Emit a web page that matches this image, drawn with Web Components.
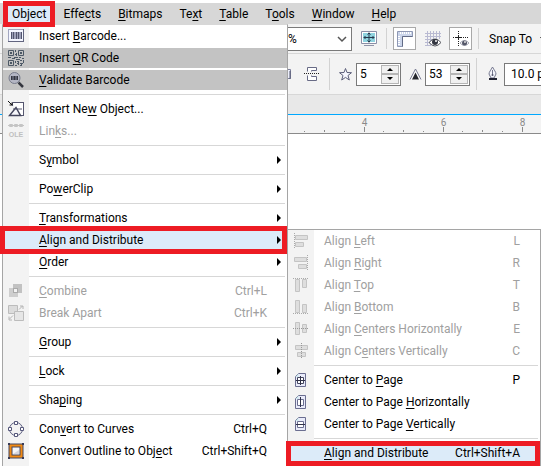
<!DOCTYPE html>
<html lang="en">
<head>
<meta charset="utf-8">
<title>Object menu</title>
<style>
html, body { margin: 0; height: 100%; }
body { overflow: hidden; font: 12px/16px Roboto, "Open Sans", sans-serif; color: #000; background: #fff; }
</style>
</head>
<body>
<app-window></app-window>

<script>
const ICONS = {
  barcode: `<rect x=".5" y="1.5" width="15" height="12" fill="#f4f6ff" stroke="#a3a7c0"/><path d="M0 13.5h16M15.5 1v13" stroke="#62657f"/><path d="M3 4h11v7H3z" fill="#9da0b8"/><path d="M3.5 4v7M5.5 4v7M8.5 4v7M10.5 4v7M13.5 4v7" stroke="#51546d"/>`,
  qr: `<g fill="none" stroke="#4d5966"><path d="M.5.5h5v5h-5zM10.5.5h5v5h-5zM.5 10.5h5v5h-5z"/><path d="M2 3h2M12 3h2M2 13h2" stroke-width="2"/><path d="M7.5 0v2M8.5 3v3M7 4.5h1M0 7.5h3M4 8.5h3M6 7.5h4M11 7.5h2M14 8.5h2M8 9.5h4M7.5 11v2M9 11.5h2M12 10.5h2M15.5 10v3M10.5 12v3M12 13.5h3M7 15.5h2M13.5 14v2M9 13.5h1M12 15.5h1"/></g>`,
  validate: `<path d="M10.5 10.5l4.500 4.500" stroke="#34363f" stroke-width="2.500"/><circle cx="6.500" cy="6" r="5.500" fill="#b4b6c4" stroke="#777b8b"/><path d="M3 4h7v4H3z" fill="#5d6070"/><path d="M3.500 4v4M6.500 4v4M9.500 4v4" stroke="#34363f"/>`,
  insert: `<path d="M4.500 1.500h11v13h-5" fill="#fff" stroke="#55566f"/><path d="M4.500 5V1.500M15.500 1v14" stroke="#55566f"/><path d="M1.500 14.500h11L8 6.500z" fill="#f6f6fa" stroke="#44455c" stroke-width="1.500"/><path d="M5 8h9" stroke="#55566f"/><path d="M0 0l4 4M4 1.500V4H1.500" fill="none" stroke="#111"/>`,
  links: `<g stroke="#c4c4c4" fill="none"><path d="M0 2.500h16"/><path d="M1.500 1.500h3v2h-3zM6.500 1.500h3v2h-3zM11.500 1.500h3v2h-3z"/></g><text x="8" y="14" text-anchor="middle" font-family="Liberation Sans" font-size="7" font-weight="700" fill="#bfbfbf">OLE</text>`,
  combine: `<path d="M5 1h9v9H5z" fill="#c2c2c2"/><path d="M1 5h9v9H1z" fill="#cecece"/><path d="M5 5h5v5H5z" fill="#aaa"/><path d="M6 6h3v3H6z" fill="#f3f3f3"/>`,
  breakapart: `<path d="M.5.5h9v8h-9z" fill="#dcdcdc" stroke="#bcbcbc"/><path d="M6.500 6.500h9v9h-9z" fill="#e6e6e6" stroke="#bcbcbc"/><path d="M11 4.500l3.500-3.500M12 1h3v3M5 10.500L1.500 14M1 11.500V15h3" fill="none" stroke="#b4b4b4"/>`,
  curves: `<circle cx="8" cy="8" r="6.500" fill="none" stroke="#55577a"/><g fill="#fff" stroke="#55577a"><path d="M6.500.5h3v3h-3zM6.500 12.500h3v3h-3zM.5 6.500h3v3h-3zM12.500 6.500h3v3h-3z"/></g>`,
  outline: `<path d="M2.500 2.500h11v11h-11z" fill="#f6f6f8" stroke="#44465f" stroke-width="4"/><path d="M2.500 2.500h11v11h-11z" fill="none" stroke="#f28a12" stroke-width="2"/><path d="M5 11h6v-4z" fill="#d5d5dd"/><path d="M0 0h2v2H0zM14 0h2v2h-2zM0 14h2v2H0zM14 14h2v2h-2z" fill="#383a55"/>`,
  left: `<path d="M1.500 0v15" stroke="#aaa" stroke-dasharray="1 1"/><path d="M2.500 2.500h12v4h-12zM2.500 9.500h8v4h-8z" fill="#dedede" stroke="#c4c4c4"/>`,
  right: `<path d="M14.500 0v15" stroke="#aaa" stroke-dasharray="1 1"/><path d="M1.500 2.500h12v4h-12zM5.500 9.500h8v4h-8z" fill="#dedede" stroke="#c4c4c4"/>`,
  top: `<path d="M0 1.500h15" stroke="#aaa" stroke-dasharray="1 1"/><path d="M2.500 2.500h4v12h-4zM9.500 2.500h4v8h-4z" fill="#dedede" stroke="#c4c4c4"/>`,
  bottom: `<path d="M0 14.500h15" stroke="#aaa" stroke-dasharray="1 1"/><path d="M2.500 1.500h4v12h-4zM9.500 5.500h4v8h-4z" fill="#dedede" stroke="#c4c4c4"/>`,
  centerh: `<path d="M2.500 1.500h4v12h-4zM9.500 3.500h4v8h-4z" fill="#dedede" stroke="#c4c4c4"/><path d="M0 7.500h15" stroke="#999" stroke-dasharray="1 1"/>`,
  centerv: `<path d="M2.500 2.500h12v4h-12zM4.500 9.500h8v4h-8z" fill="#dedede" stroke="#c4c4c4"/><path d="M8.500 0v15" stroke="#999" stroke-dasharray="1 1"/>`,
  page: `<path d="M5.500 1.500h7v13h-10V4.500z" fill="#e9ebfa" stroke="#6b6e90"/><path d="M2.500 5l3-3.500V5z" fill="#cfe9ee"/><path d="M4.500 5.500h6v6h-6z" fill="#fff" stroke="#44465f"/><path d="M7.500 4v9M3 8.500h9" stroke="#303247"/>`,
  pageh: `<path d="M5.500 1.500h7v13h-10V4.500z" fill="#e9ebfa" stroke="#6b6e90"/><path d="M2.500 5l3-3.500V5z" fill="#cfe9ee"/><path d="M4.500 5.500h6v6h-6z" fill="#fff" stroke="#6b6e90"/><path d="M7.500 3v10" stroke="#303247"/>`,
  pagev: `<path d="M5.500 1.500h7v13h-10V4.500z" fill="#e9ebfa" stroke="#6b6e90"/><path d="M2.500 5l3-3.500V5z" fill="#cfe9ee"/><path d="M4.500 5.500h6v6h-6z" fill="#fff" stroke="#6b6e90"/><path d="M3 8.500h9" stroke="#303247"/>`,
  arrow: `<path d="M6 4v8l4-4z" fill="#000"/>`,
  screen: `<path d="M.5.5h15v12H.5z" fill="#fff" stroke="#8a8ea6"/><path d="M2 2h12v9H2z" fill="#8fd3df"/><path d="M8 1.500v10M3 6.500h10M6.500 3.500L8 2l1.500 1.500M6.500 9.500L8 11l1.500-1.500M4.500 5L3 6.500 4.500 8M11.500 5L13 6.500 11.500 8" fill="none" stroke="#26384c"/><path d="M3 14.500h10" stroke="#8f93a8"/>`,
  rulers: `<path d="M.5.5h15v5h-10v10h-5z" fill="#cbd5ea" stroke="#8e98b4"/><path d="M3.500 1v2M5.500 1v2M7.500 1v2M9.500 1v2M11.500 1v2M13.500 1v2M1 5.500h2M1 7.500h2M1 9.500h2M1 11.500h2M1 13.500h2" stroke="#fff"/><path d="M5.500 15.500v-10h10" stroke="#616b86" fill="none"/>`,
  grid: `<path d="M2.500 0v15M5.500 0v15M8.500 0v15M11.500 0v8M14.500 0v8M0 2.500h16M0 5.500h16M0 8.500h9M0 11.500h6M0 14.500h6" stroke="#b9bad2"/><path d="M4 11.500q6-7 12 0q-6 7-12 0z" fill="#fff" stroke="#55575f"/><circle cx="10" cy="11" r="3" fill="#333640"/><circle cx="11" cy="10" r="1" fill="#fff"/>`,
  guides: `<path d="M5.500 0v15M0 6.500h16" stroke="#222" stroke-dasharray="1 1"/><path d="M5.500 4v5M3 6.500h5" stroke="#222"/><path d="M7 12q4.500-5 9 0q-4.500 5-9 0z" fill="#fff" stroke="#a4a6b5"/><circle cx="11.500" cy="12" r="2.500" fill="#55586a"/><circle cx="12" cy="11" r="1" fill="#ddd"/>`,
  weld: `<path d="M8.500 3.500h5v9h-5z" fill="#eceefa" stroke="#7c7f9c"/><path d="M13 5v8" stroke="#55586f"/>`,
  distribute: `<path d="M3.500 5.500v-4h9v3h-5v1M3.500 9.500v5h9v-4h-5v-1" fill="#fff" stroke="#686b86"/><path d="M0 7.500h16" stroke="#222" stroke-dasharray="1 1"/>`,
  star: `<path d="M7.500 2.500l1.500 4 4.500.2-3.500 2.800 1.300 4.500-3.800-2.600-3.800 2.600 1.300-4.500-3.500-2.800 4.500-.2z" fill="#f6f7ff" stroke="#5b5e7a"/>`,
  sharp: `<path d="M2 13.500L7.500 3 13 13.500" fill="#fff" stroke="#777a92"/><path d="M4 13.500l3.500-7 3.500 7z" fill="#26282f"/>`,
  nib: `<path d="M7.500 1C6 4 4 6 4 8l2 4h3l2-4c0-2-2-4-3.500-7z" fill="#f4f5fb" stroke="#74778e"/><path d="M7.500 4v5" stroke="#74778e"/><circle cx="7.500" cy="9" r="1" fill="#55586f"/><path d="M4 12h8v2H4z" fill="#222433"/>`,
  up: `<path d="M5 5h6L8 2z" fill="#000"/>`,
  down: `<path d="M5 2h6L8 5z" fill="#000"/>`,
  drop: `<path d="M0 6h7L3.500 10z" fill="#000"/>`,
  chevron: `<path d="M4 6l4 4 4-4" fill="none" stroke="#555" stroke-width="1.500"/>`
};

/* Shared base: renders the class's static markup into an open shadow root. */
class Part extends HTMLElement {
  constructor() {
    super();
    this.attachShadow({ mode: 'open' });
  }
  connectedCallback() { this.shadowRoot.innerHTML = this.markup(); }
}

customElements.define('ui-icon', class extends Part {
  markup() {
    return `<style>:host{display:block;flex:none;width:16px;height:16px;overflow:hidden}svg{display:block}</style>
      <svg width="16" height="16" viewBox="0 0 16 16" aria-hidden="true">${ICONS[this.getAttribute('name')]}</svg>`;
  }
});

customElements.define('menu-title', class extends Part {
  markup() {
    return `<style>
      :host{display:block;position:relative}
      button{all:unset;display:block;height:21px;line-height:22px;padding:0 9px 0 8px;white-space:nowrap}
      :host([open]) button{background:#dcebf9}
      :host([open])::after{content:"";position:absolute;inset:-2px 0 -3px -1px;border:5px solid #ed1c24;z-index:5}
      </style><button type="button"><slot></slot></button>`;
  }
});

customElements.define('menu-item', class extends Part {
  markup() {
    const icon = this.getAttribute('icon');
    const key = this.getAttribute('key');
    return `<style>
      :host{display:block;position:relative}
      button{all:unset;box-sizing:border-box;width:100%;height:22px;display:flex;align-items:center;white-space:nowrap;padding-right:20px;border:solid transparent;border-width:1px 0;background-clip:padding-box}
      .icon{width:26px;display:flex;justify-content:center;margin-right:10px;flex:none}
      .label,.key{line-height:18px}
      .key{margin-left:auto}
      .arrow{margin:0 -20px 0 auto}
      :host([disabled]) button{color:#a0a0a0}
      :host([shaded]) button{background-color:#c3c3c3}
      :host([marked]) button{background-color:#dcebf9}
      :host([marked])::after{content:"";position:absolute;inset:var(--mark-inset,-3px 0 -3px -3px);border:5px solid #ed1c24;z-index:4}
      </style>
      <button type="button" ${this.hasAttribute('disabled') ? 'disabled' : ''}>
        <span class="icon">${icon ? `<ui-icon name="${icon}"></ui-icon>` : ''}</span>
        <span class="label"><slot></slot></span>
        ${key ? `<span class="key">${key}</span>` : ''}
        ${this.hasAttribute('sub') ? '<ui-icon class="arrow" name="arrow"></ui-icon>' : ''}
      </button>`;
  }
});

customElements.define('menu-line', class extends Part {
  markup() {
    return `<style>:host{display:block;padding:3px 2px 3px 26px}
      hr{margin:0;border:0;height:1px;background:#d7d7d7}</style><hr>`;
  }
});

customElements.define('menu-panel', class extends Part {
  markup() {
    return `<style>:host{display:block;box-sizing:border-box;border:1px solid #a5a5a5;
      background:linear-gradient(90deg,#f3f3f3 26px,#fff 26px)}</style><slot></slot>`;
  }
});

customElements.define('tool-sep', class extends Part {
  markup() { return `<style>:host{display:block;align-self:stretch;flex:none;width:1px;margin:4px 6px;background:#d2d2d2}</style>`; }
});

customElements.define('tool-button', class extends Part {
  markup() {
    return `<style>:host{display:block;flex:none}
      button{all:unset;box-sizing:border-box;display:grid;place-items:center;width:23px;height:23px}
      :host([pressed]) button{background:#fff;border:1px solid #a9a9a9}</style>
      <button type="button" aria-label="${this.getAttribute('label')}"><ui-icon name="${this.getAttribute('icon')}"></ui-icon></button>`;
  }
});

customElements.define('zoom-select', class extends Part {
  markup() {
    return `<style>:host{display:flex;flex:none;align-items:center;box-sizing:border-box;height:24px;border:1px solid #7a7a7a;background:#fff}
      select{all:unset;font:inherit;flex:1}
      ui-icon{margin-right:1px}</style>
      <select aria-label="Zoom level"><option>%</option></select><ui-icon name="chevron"></ui-icon>`;
  }
});

customElements.define('number-field', class extends Part {
  markup() {
    const plain = this.hasAttribute('plain');
    return `<style>:host{display:flex;flex:none;box-sizing:border-box;width:45px;height:23px;border:1px solid #7a7a7a;background:#fff}
      :host([plain]){width:80px}
      input{all:unset;font:inherit;flex:1;min-width:0;padding-left:3px}
      :host([plain]) input{padding-left:6px}
      .spin{display:flex;flex-direction:column;margin:1px;width:18px}
      button{all:unset;flex:1;min-height:0;display:flex;justify-content:center;overflow:hidden;border:1px solid #b5b5b5;background:#f0f0f0}
      .spin ui-icon{height:7px}
      </style><input aria-label="${this.getAttribute('label')}" value="${this.getAttribute('value')}">
      ${plain ? '' : `<div class="spin"><button type="button" aria-label="Increase"><ui-icon name="up"></ui-icon></button><button type="button" aria-label="Decrease"><ui-icon name="down"></ui-icon></button></div>`}`;
  }
});

customElements.define('page-ruler', class extends Part {
  markup() {
    let marks = '';
    for (let i = 0; i < 16; i++) {
      const x = Math.floor(8 + 79 * i / 4);
      const h = i % 4 === 0 ? 5 : i % 4 === 2 ? 2 : 1;
      marks += `<path d="M${x + .5} ${17 - h}v${h}" stroke="#8a8a8a"/>`;
      if (i % 4 === 0 && i) marks += `<text x="${x + .5}" y="11" text-anchor="middle">${i / 2 + 2}</text>`;
    }
    return `<style>:host{display:block;background:#f3f3f3;border-top:1px solid #00a8ff;border-bottom:1px solid #8a8a8a}
      svg{display:block;width:100%;height:18px}text{font-size:10px;fill:#8a8a8a}</style>
      <svg aria-label="Ruler"><g transform="translate(277 0)">${marks}</g></svg>`;
  }
});

customElements.define('app-window', class extends Part {
  markup() {
    return `<style>
      :host{display:flex;flex-direction:column;position:relative;min-height:100vh;overflow:hidden}
      u{text-decoration:underline;text-underline-offset:2px;text-decoration-thickness:1px}
      nav{display:flex;margin-top:3px;padding-left:4px;background:#d7d7d7}
      .bar{display:flex;align-items:center;border-bottom:1px solid #d7d7d7;background:#f3f3f3;white-space:nowrap;overflow:hidden}
      .first{height:29px;padding-left:287px}
      .second{height:40px;padding-left:277px}
      zoom-select{width:65px;margin-right:5px}
      .first [icon=grid]{margin:0 5px}
      .snap{all:unset;flex:none;display:flex;align-items:center;gap:8px;padding-left:4px}
      .second [icon=distribute]{margin-left:7px}
      .second [icon=star]{margin:0 -1px 0 -2px}
      .second [icon=sharp]{margin:0 -2px 0 3px}
      .second [icon=nib]{margin-left:-2px}
      .gap{height:19px;background:#e8e8e8}
      .canvas{flex:1;background:#fff}
      .main{position:absolute;left:2px;top:24px;bottom:-8px;width:286px;border-top-color:#d7d7d7}
      .sub{position:absolute;left:287px;top:229px;right:0;bottom:-8px;--mark-inset:-1px 0 -2px -2px}
      </style>
      <nav>
        <menu-title open>Object</menu-title><menu-title>Effe<u>c</u>ts</menu-title><menu-title><u>B</u>itmaps</menu-title><menu-title>Te<u>x</u>t</menu-title><menu-title><u>T</u>able</menu-title><menu-title>T<u>o</u>ols</menu-title><menu-title><u>W</u>indow</menu-title><menu-title><u>H</u>elp</menu-title>
      </nav>
      <div class="bar first">
        <zoom-select></zoom-select>
        <tool-button icon="screen" label="Full-screen preview"></tool-button>
        <tool-sep></tool-sep>
        <tool-button icon="rulers" label="Show rulers" pressed></tool-button>
        <tool-button icon="grid" label="Show grid"></tool-button>
        <tool-button icon="guides" label="Show guidelines" pressed></tool-button>
        <tool-sep></tool-sep>
        <button class="snap" type="button">Snap To<ui-icon name="drop"></ui-icon></button>
      </div>
      <div class="bar second">
        <ui-icon name="weld"></ui-icon>
        <tool-button icon="distribute" label="Distribute"></tool-button>
        <tool-sep></tool-sep>
        <tool-button icon="star" label="Star points"></tool-button>
        <number-field label="Points" value="5"></number-field>
        <tool-button icon="sharp" label="Sharpness"></tool-button>
        <number-field label="Sharpness" value="53"></number-field>
        <tool-sep></tool-sep>
        <tool-button icon="nib" label="Outline width"></tool-button>
        <number-field plain label="Outline width" value="10.0 pt"></number-field>
      </div>
      <div class="gap"></div>
      <page-ruler></page-ruler>
      <div class="canvas"></div>

      <menu-panel class="main">
        <menu-item icon="barcode">Insert <u>B</u>arcode...</menu-item>
        <menu-item icon="qr" shaded>Insert <u>Q</u>R Code</menu-item>
        <menu-item icon="validate" shaded><u>V</u>alidate Barcode</menu-item>
        <menu-line></menu-line>
        <menu-item icon="insert">Insert Ne<u>w</u> Object...</menu-item>
        <menu-item icon="links" disabled>Lin<u>k</u>s...</menu-item>
        <menu-line></menu-line>
        <menu-item sub>S<u>y</u>mbol</menu-item>
        <menu-line></menu-line>
        <menu-item sub>Po<u>w</u>erClip</menu-item>
        <menu-line></menu-line>
        <menu-item sub><u>T</u>ransformations</menu-item>
        <menu-item sub marked><u>A</u>lign and Distribute</menu-item>
        <menu-item sub><u>O</u>rder</menu-item>
        <menu-line></menu-line>
        <menu-item icon="combine" key="Ctrl+L" disabled><u>C</u>ombine</menu-item>
        <menu-item icon="breakapart" key="Ctrl+K" disabled>Break Apart</menu-item>
        <menu-line></menu-line>
        <menu-item sub><u>G</u>roup</menu-item>
        <menu-line></menu-line>
        <menu-item sub><u>L</u>ock</menu-item>
        <menu-line></menu-line>
        <menu-item sub>Sha<u>p</u>ing</menu-item>
        <menu-line></menu-line>
        <menu-item icon="curves" key="Ctrl+Q">Con<u>v</u>ert to Curves</menu-item>
        <menu-item icon="outline" key="Ctrl+Shift+Q">Convert Outline to Obj<u>e</u>ct</menu-item>
      </menu-panel>

      <menu-panel class="sub">
        <menu-item icon="left" key="L" disabled>Align <u>L</u>eft</menu-item>
        <menu-item icon="right" key="R" disabled>Align <u>R</u>ight</menu-item>
        <menu-item icon="top" key="T" disabled>Align <u>T</u>op</menu-item>
        <menu-item icon="bottom" key="B" disabled>Align <u>B</u>ottom</menu-item>
        <menu-item icon="centerh" key="E" disabled>Align <u>C</u>enters Horizontally</menu-item>
        <menu-item icon="centerv" key="C" disabled>Align C<u>e</u>nters Vertically</menu-item>
        <menu-line></menu-line>
        <menu-item icon="page" key="P">Center to <u>P</u>age</menu-item>
        <menu-item icon="pageh">Center to Page <u>H</u>orizontally</menu-item>
        <menu-item icon="pagev">Center to Page <u>V</u>ertically</menu-item>
        <menu-line></menu-line>
        <menu-item key="Ctrl+Shift+A" marked><u>A</u>lign and Distribute</menu-item>
      </menu-panel>`;
  }
});
</script>
</body>
</html>
